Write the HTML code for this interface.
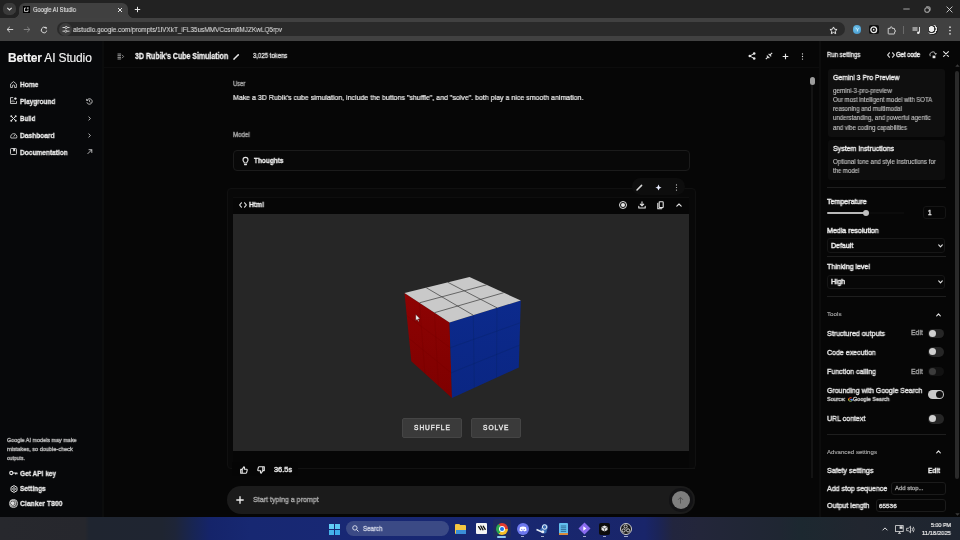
<!DOCTYPE html>
<html><head><meta charset="utf-8">
<style>
*{box-sizing:border-box;margin:0;padding:0}
html,body{width:960px;height:540px;overflow:hidden;background:#060606;font-family:"Liberation Sans",sans-serif;color:#e8e8e8}
.a{position:absolute}
.t{position:absolute;white-space:pre;line-height:1;will-change:transform;-webkit-text-stroke:0.38px currentColor}
svg{position:absolute;overflow:visible}
.ic{fill:none;stroke:#e6e6e6;stroke-width:1.1;stroke-linecap:round;stroke-linejoin:round}
.dv{position:absolute;left:827px;width:119px;height:1px;background:#1e1e1e}
.dd{position:absolute;left:827px;width:118px;height:15px;border:1px solid #161616;border-radius:3px;background:#070707}
.tg{position:absolute;left:928px;width:16px;height:9.5px;border-radius:5px;background:#262626}
.kn{position:absolute;width:7px;height:7px;border-radius:50%;background:#d0d0d0}
.tb{position:absolute;top:517px;height:23px}
</style></head><body>
<!-- ============ CHROME ============ -->
<div class="a" style="left:0;top:0;width:960px;height:18px;background:#222"></div>
<div class="a" style="left:3px;top:3px;width:13px;height:12px;background:#3a3a3a;border-radius:5px"></div>
<svg style="left:6px;top:6px" width="7" height="6" viewBox="0 0 7 6"><path d="M1.3 1.9 L3.5 4 L5.7 1.9" stroke="#dcdcdc" stroke-width="1.2" fill="none"/></svg>
<div class="a" style="left:19px;top:3px;width:109px;height:16px;background:#404040;border-radius:6px 6px 0 0"></div>
<div class="a" style="left:14px;top:13px;width:5px;height:5px;background:radial-gradient(circle at 0 0,#222 4.6px,#404040 5px)"></div>
<div class="a" style="left:128px;top:13px;width:5px;height:5px;background:radial-gradient(circle at 100% 0,#222 4.6px,#404040 5px)"></div>
<div class="a" style="left:23px;top:6px;width:7px;height:7px;background:#000"></div>
<svg style="left:24px;top:7px" width="5" height="5" viewBox="0 0 5 5"><path d="M0.5 1 V4.4 H4 V2.6 M0.5 1 H2.2" stroke="#eee" stroke-width="0.8" fill="none"/><circle cx="3.9" cy="1.1" r="0.8" fill="#eee"/></svg>
<svg style="left:117px;top:6.5px" width="6" height="6" viewBox="0 0 6 6"><path d="M1 1 L5 5 M5 1 L1 5" stroke="#e8e8e8" stroke-width="1"/></svg>
<svg style="left:134px;top:6px" width="7" height="7" viewBox="0 0 7 7"><path d="M3.5 0.8 V6.2 M0.8 3.5 H6.2" stroke="#e8e8e8" stroke-width="1"/></svg>
<svg style="left:903px;top:8px" width="7" height="2" viewBox="0 0 7 2"><path d="M0.3 1 H6.7" stroke="#c8c8c8" stroke-width="0.8"/></svg>
<svg style="left:924px;top:5.5px" width="7" height="7" viewBox="0 0 7 7"><rect x="0.9" y="1.9" width="4.4" height="4.3" rx="1.3" stroke="#d0d0d0" stroke-width="0.9" fill="none"/><path d="M2.2 0.8 H4.8 Q6.1 0.8 6.1 2.1 V4.6" stroke="#d0d0d0" stroke-width="0.8" fill="none"/></svg>
<svg style="left:945.5px;top:5.5px" width="7" height="7" viewBox="0 0 7 7"><path d="M0.6 0.6 L6.4 6.4 M6.4 0.6 L0.6 6.4" stroke="#e0e0e0" stroke-width="0.85"/></svg>

<div class="a" style="left:0;top:18px;width:960px;height:23px;background:#414141"></div>
<svg style="left:6.2px;top:25.8px" width="8" height="7" viewBox="0 0 8 7"><path d="M7.2 3.5 H1.2 M3.8 0.9 L1.1 3.5 L3.8 6.1" stroke="#e0e0e0" stroke-width="0.9" fill="none"/></svg>
<svg style="left:23.3px;top:25.8px" width="8" height="7" viewBox="0 0 8 7"><path d="M0.8 3.5 H6.8 M4.2 0.9 L6.9 3.5 L4.2 6.1" stroke="#8a8a8a" stroke-width="0.9" fill="none"/></svg>
<svg style="left:40.3px;top:25.6px" width="8" height="8" viewBox="0 0 8 8"><path d="M6.6 4.6 A2.7 2.7 0 1 1 5.6 1.9" stroke="#e0e0e0" stroke-width="0.95" fill="none"/><path d="M4.4 0.6 L6.9 1.2 L6.4 3.6 Z" fill="#e0e0e0"/></svg>
<div class="a" style="left:57px;top:21.8px;width:788px;height:14.6px;border-radius:7.3px;background:#2a2a2a"></div>
<div class="a" style="left:58.5px;top:22.6px;width:13px;height:13px;border-radius:6.5px;background:#3d3d3d"></div>
<svg style="left:61.5px;top:26px" width="8" height="7" viewBox="0 0 8 7"><path d="M0.5 1.5 H3 M5.4 1.5 H7.5 M0.5 5.2 H2.4 M4.9 5.2 H7.5" stroke="#e0e0e0" stroke-width="0.9"/><circle cx="4.2" cy="1.5" r="1.1" stroke="#e0e0e0" stroke-width="0.8" fill="none"/><circle cx="3.7" cy="5.2" r="1.1" stroke="#e0e0e0" stroke-width="0.8" fill="none"/></svg>
<svg style="left:829px;top:25.5px" width="9" height="9" viewBox="0 0 24 24"><path d="M12 2.5 L14.8 8.6 L21.5 9.3 L16.5 13.8 L17.9 20.5 L12 17.1 L6.1 20.5 L7.5 13.8 L2.5 9.3 L9.2 8.6 Z" stroke="#e6e6e6" stroke-width="2.6" fill="none" stroke-linejoin="round"/></svg>
<div class="a" style="left:852.5px;top:25.3px;width:8.5px;height:8.5px;border-radius:50%;background:radial-gradient(circle at 40% 40%,#74c8ee,#3a8cc4)"></div>
<svg style="left:854.5px;top:27.3px" width="5" height="5" viewBox="0 0 5 5"><path d="M0.6 1 L2.5 2.5 L4.4 1 M2.5 2.5 V4.4" stroke="#eaf6ff" stroke-width="0.7" fill="none"/></svg>
<div class="a" style="left:869.3px;top:25px;width:9.4px;height:9.4px;border-radius:2px;background:#0e0e0e"></div>
<svg style="left:869.3px;top:25px" width="9.4" height="9.4" viewBox="0 0 9.4 9.4"><circle cx="4.7" cy="4.7" r="2.9" stroke="#f0f0f0" stroke-width="1.3" fill="none"/><circle cx="4.7" cy="4.7" r="0.9" fill="#e0e0e0"/></svg>
<svg style="left:886.5px;top:25.5px" width="9" height="9" viewBox="0 0 9 9"><path d="M1.2 2.4 H3.2 V1.8 Q3.2 0.8 4.2 0.8 Q5.2 0.8 5.2 1.8 V2.4 H7 Q7.6 2.4 7.6 3 V4.2 H7.9 Q8.5 4.2 8.5 5 Q8.5 5.8 7.9 5.8 H7.6 V7.4 Q7.6 8 7 8 H1.8 Q1.2 8 1.2 7.4 Z" stroke="#dcdcdc" stroke-width="0.9" fill="none" stroke-linejoin="round"/></svg>
<div class="a" style="left:903px;top:26px;width:1px;height:8px;background:#6a6a6a"></div>
<svg style="left:912px;top:25.5px" width="9" height="9" viewBox="0 0 9 9"><rect x="0.5" y="1" width="5" height="4" fill="#9a9a9a"/><path d="M7.5 1 V6.5" stroke="#eee" stroke-width="0.9"/><circle cx="6.3" cy="6.8" r="1.3" fill="#eee"/></svg>
<div class="a" style="left:928px;top:25px;width:9.5px;height:9.5px;border-radius:50%;background:radial-gradient(circle at 35% 40%,#f0f0f0 0 30%,#333 32% 45%,#ddd 47% 60%,#222 62%)"></div>
<svg style="left:947.5px;top:25.5px" width="4" height="9" viewBox="0 0 4 9"><circle cx="2" cy="1.2" r="0.85" fill="#ddd"/><circle cx="2" cy="4.5" r="0.85" fill="#ddd"/><circle cx="2" cy="7.8" r="0.85" fill="#ddd"/></svg>

<!-- ============ PAGE ============ -->
<div class="a" style="left:0;top:41px;width:102px;height:476px;background:#07080a"></div>
<div class="a" style="left:102px;top:41px;width:2px;height:476px;background:#0b0c0c"></div>
<div class="a" style="left:104px;top:66.5px;width:715px;height:1px;background:#0c0c0c"></div>
<div class="a" style="left:818.5px;top:41px;width:2px;height:476px;background:#0c0c0c"></div>

<!-- sidebar logo -->
<div class="t" style="left:8.1px;top:51.6px;font-size:12px;letter-spacing:-0.15px;color:#f2f2f2;-webkit-text-stroke:0.15px currentColor"><b>Better</b> AI Studio</div>
<!-- sidebar icons -->
<svg style="left:10px;top:81px" width="7" height="7" viewBox="0 0 7 7"><path d="M0.6 3 L3.5 0.6 L6.4 3 V6.5 H4.6 V5 A1.1 1.1 0 0 0 2.4 5 V6.5 H0.6 Z" stroke="#dedede" stroke-width="0.8" fill="none" stroke-linejoin="round"/></svg>
<svg style="left:10px;top:97.3px" width="7" height="7" viewBox="0 0 7 7"><path d="M0.5 0.6 V6.5 H6.5 V4.2 M0.5 0.6 H3.2" stroke="#dedede" stroke-width="0.85" fill="none"/><path d="M1.8 5.2 V3.6 M3 5.2 V2.6 M4.2 5.2 V4" stroke="#cfcfcf" stroke-width="0.7"/><circle cx="5.4" cy="1.6" r="1.2" fill="#ececec"/></svg>
<svg style="left:10px;top:114.5px" width="7" height="7" viewBox="0 0 7 7"><path d="M1.3 1.3 L5.7 5.7 M5.7 1.3 L1.3 5.7" stroke="#dedede" stroke-width="1"/><circle cx="1.3" cy="1.3" r="1" fill="#dedede"/><circle cx="5.7" cy="1.3" r="1" fill="#dedede"/><circle cx="1.3" cy="5.7" r="1" fill="#dedede"/><circle cx="5.7" cy="5.7" r="1" fill="#dedede"/></svg>
<svg style="left:10px;top:131.5px" width="7.5" height="7" viewBox="0 0 7.5 7"><path d="M0.9 6 A3.1 3.1 0 1 1 6.6 6 Z" stroke="#dedede" stroke-width="0.8" fill="none"/><path d="M3.7 4.6 L5.3 2.6" stroke="#dedede" stroke-width="0.8"/></svg>
<svg style="left:10px;top:147.7px" width="7" height="7" viewBox="0 0 7 7"><rect x="0.5" y="0.5" width="6" height="6" rx="0.8" stroke="#dedede" stroke-width="0.85" fill="none"/><path d="M3.2 0.6 V3.6 L4.2 2.9 L5.2 3.6 V0.6 Z" fill="#e6e6e6"/></svg>
<svg style="left:85.5px;top:98px" width="7" height="7" viewBox="0 0 7 7"><path d="M1.1 2.2 A2.7 2.7 0 1 1 0.9 4.3" stroke="#dedede" stroke-width="0.8" fill="none"/><path d="M0.6 0.9 V2.5 H2.2 M3.5 2.1 V3.6 L4.5 4.3" stroke="#dedede" stroke-width="0.75" fill="none"/></svg>
<svg style="left:87.8px;top:116px" width="3" height="5" viewBox="0 0 3 5"><path d="M0.6 0.6 L2.4 2.5 L0.6 4.4" stroke="#d8d8d8" stroke-width="0.8" fill="none"/></svg>
<svg style="left:87.8px;top:133px" width="3" height="5" viewBox="0 0 3 5"><path d="M0.6 0.6 L2.4 2.5 L0.6 4.4" stroke="#d8d8d8" stroke-width="0.8" fill="none"/></svg>
<svg style="left:86.5px;top:149px" width="5.5" height="5.5" viewBox="0 0 5.5 5.5"><path d="M0.6 4.9 L4.8 0.7 M1.6 0.7 H4.8 V3.9" stroke="#dedede" stroke-width="0.8" fill="none"/></svg>
<svg style="left:9.2px;top:470.3px" width="9" height="6" viewBox="0 0 9 6"><circle cx="2.3" cy="3" r="1.6" stroke="#e6e6e6" stroke-width="1.1" fill="none"/><path d="M3.9 3 H8.4 M6.6 3 V4.6 M8 3 V4.2" stroke="#e6e6e6" stroke-width="1.1"/></svg>
<svg style="left:9.5px;top:484.5px" width="8" height="8" viewBox="0 0 8 8"><path d="M4 0.6 L7 2.3 V5.7 L4 7.4 L1 5.7 V2.3 Z" stroke="#e6e6e6" stroke-width="1" fill="none" stroke-linejoin="round"/><circle cx="4" cy="4" r="1.3" stroke="#e6e6e6" stroke-width="0.9" fill="none"/></svg>
<div class="a" style="left:9px;top:499px;width:8.5px;height:8.5px;border-radius:50%;background:radial-gradient(circle at 40% 45%,#ddd 0 25%,#555 35%,#bbb 50%,#333 70%);border:0.8px solid #ccc"></div>

<!-- main header -->
<svg style="left:116.5px;top:52.5px" width="7" height="7" viewBox="0 0 7 7"><path d="M0.5 1 H4 M0.5 2.7 H4 M0.5 4.4 H4 M0.5 6 H4" stroke="#a8a8a8" stroke-width="0.9"/><path d="M5 1.8 L6.6 3.5 L5 5.2" stroke="#a8a8a8" stroke-width="0.8" fill="none"/></svg>
<svg style="left:233px;top:52.5px" width="7" height="7" viewBox="0 0 7 7"><path d="M1 6 L5.3 1.7" stroke="#e8e8e8" stroke-width="1.5" stroke-linecap="round"/><path d="M0.6 6.4 L1.6 6" stroke="#e8e8e8" stroke-width="0.8"/></svg>
<svg style="left:748px;top:52px" width="8" height="8" viewBox="0 0 8 8"><path d="M6 1.5 L2 4 L6 6.5" stroke="#e8e8e8" stroke-width="0.9" fill="none"/><circle cx="6.2" cy="1.5" r="1.3" fill="#e8e8e8"/><circle cx="1.8" cy="4" r="1.3" fill="#e8e8e8"/><circle cx="6.2" cy="6.5" r="1.3" fill="#e8e8e8"/></svg>
<svg style="left:764.5px;top:52px" width="8" height="8" viewBox="0 0 8 8"><path d="M0.8 7.2 L3.2 4.8 M4.8 3.2 L7.2 0.8" stroke="#e4e4e4" stroke-width="1.1"/><path d="M1.8 3.6 L4.4 6.2 M3.6 1.8 L6.2 4.4" stroke="#e4e4e4" stroke-width="1.1"/></svg>
<svg style="left:782.2px;top:52.5px" width="7" height="7" viewBox="0 0 7 7"><path d="M3.5 0.7 V6.3 M0.7 3.5 H6.3" stroke="#e8e8e8" stroke-width="1.15"/></svg>
<svg style="left:801px;top:52.5px" width="3" height="7" viewBox="0 0 3 7"><circle cx="1.5" cy="0.9" r="0.65" fill="#ddd"/><circle cx="1.5" cy="3.5" r="0.65" fill="#ddd"/><circle cx="1.5" cy="6.1" r="0.65" fill="#ddd"/></svg>
<!-- main scrollbar -->
<div class="a" style="left:811.2px;top:85px;width:1.5px;height:393px;background:#131313"></div>
<div class="a" style="left:810px;top:77px;width:5px;height:7.5px;border-radius:2.5px;background:#9c9c9c"></div>

<!-- thoughts -->
<div class="a" style="left:232.5px;top:149.5px;width:457px;height:21.5px;border:1px solid #1b1b1b;border-radius:4px;background:#080808"></div>
<svg style="left:242px;top:156.5px" width="7" height="9" viewBox="0 0 7 9"><path class="ic" d="M2.3 6 C2.3 4.8 1 4.2 1 2.9 A2.5 2.5 0 0 1 6 2.9 C6 4.2 4.7 4.8 4.7 6 Z M2.5 7.6 H4.5" stroke-width="0.8"/></svg>

<!-- html block -->
<div class="a" style="left:227px;top:188px;width:468.5px;height:281px;border:1px solid #101010;border-radius:4px;background:#080808"></div>
<div class="a" style="left:233px;top:196.5px;width:456px;height:17px;background:#060606;border-top:1px solid #0e0e0e"></div>
<div class="a" style="left:233px;top:451.3px;width:456px;height:17px;background:#060606"></div>
<div class="a" style="left:233px;top:213.5px;width:456px;height:237.8px;background:#262626"></div>
<!-- floating pill -->
<div class="a" style="left:631.5px;top:177.5px;width:53px;height:17.5px;border-radius:9px;background:#0d0d0d"></div>
<svg style="left:635.5px;top:184px" width="7" height="7" viewBox="0 0 7 7"><path d="M1 6 L5.6 1.4" stroke="#d8d8d8" stroke-width="1.5" stroke-linecap="round"/></svg>
<svg style="left:654.5px;top:183.5px" width="7" height="7" viewBox="0 0 7 7"><path d="M3.5 0.4 Q3.9 3.1 6.6 3.5 Q3.9 3.9 3.5 6.6 Q3.1 3.9 0.4 3.5 Q3.1 3.1 3.5 0.4 Z" fill="#e8ecff"/></svg>
<svg style="left:675px;top:183.5px" width="3" height="7" viewBox="0 0 3 7"><circle cx="1.5" cy="0.9" r="0.6" fill="#ccc"/><circle cx="1.5" cy="3.5" r="0.6" fill="#ccc"/><circle cx="1.5" cy="6.1" r="0.6" fill="#ccc"/></svg>
<!-- html header icons -->
<svg style="left:239px;top:201.5px" width="8" height="6" viewBox="0 0 8 6"><path class="ic" d="M2.4 0.8 L0.6 3 L2.4 5.2 M5.6 0.8 L7.4 3 L5.6 5.2" stroke-width="0.9"/></svg>
<div class="a" style="left:618.5px;top:200.7px;width:8.6px;height:8.6px;border-radius:50%;border:1px solid #e0e0e0"></div>
<div class="a" style="left:620.8px;top:203px;width:4px;height:4px;border-radius:50%;background:#e8e8e8"></div>
<svg style="left:637.5px;top:201px" width="8" height="8" viewBox="0 0 8 8"><path class="ic" d="M4 0.8 V4.8 M2.3 3.2 L4 4.9 L5.7 3.2 M0.8 5.4 V7 H7.2 V5.4" stroke-width="0.9"/></svg>
<svg style="left:656.5px;top:200.5px" width="7" height="9" viewBox="0 0 7 9"><rect class="ic" x="2.2" y="0.8" width="4" height="5.8" rx="0.6" stroke-width="0.85"/><path class="ic" d="M0.8 2.4 V7.8 H4.6" stroke-width="0.85"/></svg>
<svg style="left:675.5px;top:203px" width="6" height="4" viewBox="0 0 6 4"><path class="ic" d="M0.8 3.2 L3 1 L5.2 3.2" stroke-width="0.9"/></svg>

<!-- cube -->
<svg style="left:0;top:0" width="960" height="540" viewBox="0 0 960 540">
  <defs><linearGradient id="rg" x1="0" y1="0" x2="0" y2="1"><stop offset="0" stop-color="#8e0303"/><stop offset="1" stop-color="#7e0000"/></linearGradient>
  <linearGradient id="bg" x1="0" y1="0" x2="0" y2="1"><stop offset="0" stop-color="#0c2a8c"/><stop offset="1" stop-color="#0a2683"/></linearGradient></defs>
  <polygon points="404.5,293 449.5,322.5 452,398 411.3,361.3" fill="url(#rg)"/>
  <polygon points="449.5,322.5 520.8,300.5 518.8,367.5 452,398" fill="url(#bg)"/>
  <polygon points="404.5,293 469.5,277 520.8,300.5 449.5,322.5" fill="#c9c9c9"/>
  <g stroke="#3a3a3a" stroke-width="0.7"><line x1="426.2" y1="287.7" x2="473.3" y2="315.2"/><line x1="447.8" y1="282.3" x2="497.0" y2="307.8"/><line x1="419.5" y1="302.8" x2="486.6" y2="284.8"/><line x1="434.5" y1="312.7" x2="503.7" y2="292.7"/></g>
  <g stroke="#08205e" stroke-width="0.5" stroke-opacity="0.6"><line x1="473.3" y1="315.2" x2="474.3" y2="387.8"/><line x1="497.0" y1="307.8" x2="496.5" y2="377.7"/><line x1="450.3" y1="347.7" x2="520.1" y2="322.8"/><line x1="451.2" y1="372.8" x2="519.5" y2="345.2"/></g>
  <g stroke="#600000" stroke-width="0.5" stroke-opacity="0.35"><line x1="419.5" y1="302.8" x2="424.9" y2="373.5"/><line x1="434.5" y1="312.7" x2="438.4" y2="385.8"/><line x1="406.8" y1="315.8" x2="450.3" y2="347.7"/><line x1="409.0" y1="338.5" x2="451.2" y2="372.8"/></g>
  <path d="M415.8 314.5 L415.8 320.5 L417.2 319.2 L418.3 321.6 L419.1 321.2 L418 318.9 L419.9 318.8 Z" fill="#f4f4f4" stroke="#222" stroke-width="0.3"/>
</svg>
<!-- buttons -->
<div class="a" style="left:402px;top:417.5px;width:60px;height:20.5px;border:1px solid #454545;border-radius:2px;background:#3a3a3a"></div>
<div class="a" style="left:471px;top:417.5px;width:49.5px;height:20.5px;border:1px solid #454545;border-radius:2px;background:#3a3a3a"></div>

<!-- thumbs row -->
<div class="a" style="left:232px;top:462px;width:66px;height:14px;background:#050505"></div>
<div class="a" style="left:298px;top:468px;width:397px;height:1px;background:#121212"></div>
<svg style="left:240px;top:465.5px" width="8" height="8" viewBox="0 0 8 8"><path class="ic" d="M0.7 3.4 H2.2 V7.2 H0.7 Z M2.2 3.4 L3.8 0.8 Q4.8 0.9 4.5 2.4 L4.3 3.2 H6.7 Q7.4 3.4 7.2 4.2 L6.6 6.6 Q6.4 7.2 5.8 7.2 H2.2" stroke-width="0.85"/></svg>
<svg style="left:257px;top:466px" width="8" height="8" viewBox="0 0 8 8"><path class="ic" d="M7.3 4.6 H5.8 V0.8 H7.3 Z M5.8 4.6 L4.2 7.2 Q3.2 7.1 3.5 5.6 L3.7 4.8 H1.3 Q0.6 4.6 0.8 3.8 L1.4 1.4 Q1.6 0.8 2.2 0.8 H5.8" stroke-width="0.85"/></svg>

<!-- input -->
<div class="a" style="left:227.3px;top:485.8px;width:467.7px;height:27.8px;border-radius:14px;background:#1b1b1b"></div>
<svg style="left:236.2px;top:496px" width="8" height="8" viewBox="0 0 8 8"><path d="M4 0.3 V7.7 M0.3 4 H7.7" stroke="#ececec" stroke-width="1.35"/></svg>
<div class="a" style="left:669.2px;top:488.2px;width:23.4px;height:23.4px;border-radius:50%;background:#131315"></div>
<div class="a" style="left:671.7px;top:490.7px;width:18.4px;height:18.4px;border-radius:50%;background:#7e7e7e"></div>
<svg style="left:677.4px;top:496px" width="7" height="8" viewBox="0 0 7 8"><path d="M3.5 7.5 V1.6 M1.1 3.8 L3.5 1.3 L5.9 3.8" stroke="#555" stroke-width="1" fill="none"/></svg>

<!-- ============ RIGHT PANEL ============ -->
<svg style="left:886.5px;top:51.8px" width="8" height="6" viewBox="0 0 8 6"><path class="ic" d="M2.4 0.8 L0.6 3 L2.4 5.2 M5.6 0.8 L7.4 3 L5.6 5.2" stroke-width="0.9"/></svg>
<svg style="left:928.8px;top:50.6px" width="8" height="8" viewBox="0 0 8 8"><path d="M1.2 5.2 A2.9 2.9 0 1 1 6.6 3.2" stroke="#e0e0e0" stroke-width="0.8" fill="none"/><path d="M5.6 2.3 L6.7 3.5 L7.6 2.2" stroke="#e0e0e0" stroke-width="0.7" fill="none"/><rect x="3.6" y="4.6" width="2.8" height="2.6" fill="#e6e6e6"/></svg>
<svg style="left:943.2px;top:51.4px" width="6" height="6" viewBox="0 0 6 6"><path class="ic" d="M0.6 0.6 L5.4 5.4 M5.4 0.6 L0.6 5.4" stroke-width="0.9"/></svg>
<div class="a" style="left:828px;top:69px;width:117px;height:67.5px;border-radius:3px;background:#0f0f0f"></div>
<div class="a" style="left:828px;top:140px;width:117px;height:39.5px;border-radius:3px;background:#0d0d0d"></div>
<div class="dv" style="top:186.5px"></div>
<div class="dv" style="top:256px"></div>
<div class="dv" style="top:296px"></div>
<div class="dv" style="top:434px"></div>
<!-- slider -->
<div class="a" style="left:827px;top:212px;width:39px;height:1.6px;background:#b8b8b8;border-radius:1px"></div>
<div class="a" style="left:866px;top:212px;width:38px;height:1.6px;background:#0b0b0b"></div>
<div class="a" style="left:862.6px;top:209.5px;width:6.8px;height:6.8px;border-radius:50%;background:#c0c0c0"></div>
<div class="a" style="left:923px;top:206px;width:22.5px;height:13px;border:1px solid #151515;border-radius:3px"></div>
<div class="dd" style="top:238px;height:14.5px"></div>
<div class="dd" style="top:274.5px;height:14.5px"></div>
<svg style="left:937.5px;top:243.5px" width="5" height="4" viewBox="0 0 5 4"><path class="ic" d="M0.7 0.9 L2.5 2.8 L4.3 0.9" stroke-width="0.8"/></svg>
<svg style="left:937.5px;top:280px" width="5" height="4" viewBox="0 0 5 4"><path class="ic" d="M0.7 0.9 L2.5 2.8 L4.3 0.9" stroke-width="0.8"/></svg>
<svg style="left:936px;top:312.5px" width="5" height="4" viewBox="0 0 5 4"><path class="ic" d="M0.7 2.8 L2.5 0.9 L4.3 2.8" stroke-width="0.8"/></svg>
<svg style="left:936px;top:450px" width="5" height="4" viewBox="0 0 5 4"><path class="ic" d="M0.7 2.8 L2.5 0.9 L4.3 2.8" stroke-width="0.8"/></svg>
<!-- toggles -->
<div class="tg" style="top:328.5px"></div><div class="kn" style="left:928.9px;top:329.7px"></div>
<div class="tg" style="top:347px"></div><div class="kn" style="left:928.9px;top:348.2px"></div>
<div class="tg" style="top:366.5px;background:#121212"></div><div class="kn" style="left:928.9px;top:367.7px;background:#3c3c3c"></div>
<div class="tg" style="top:389.5px;width:16.5px;height:9.8px;left:927.6px;background:#c9c9c9"></div><div class="kn" style="left:935.6px;top:390.8px;background:#101010"></div>
<div class="tg" style="top:414px"></div><div class="kn" style="left:928.9px;top:415.2px"></div>
<!-- google G -->
<svg style="left:847.8px;top:396.6px" width="5" height="5" viewBox="0 0 10 10"><path d="M9.4 5.1 C9.4 4.8 9.4 4.5 9.3 4.2 H5 V6 H7.5 C7.3 6.7 6.4 7.7 5 7.7 C3.5 7.7 2.3 6.5 2.3 5 C2.3 3.5 3.5 2.3 5 2.3 C5.8 2.3 6.4 2.6 6.8 3 L8.1 1.7 C7.3 1 6.2 0.5 5 0.5 C2.5 0.5 0.5 2.5 0.5 5 C0.5 7.5 2.5 9.5 5 9.5 C7.6 9.5 9.4 7.7 9.4 5.1 Z" fill="#e94235"/><path d="M0.5 5 C0.5 7.5 2.5 9.5 5 9.5 C7.6 9.5 9.4 7.7 9.4 5.1 H5 V6 H7.5 C7.3 6.7 6.4 7.7 5 7.7 C3.5 7.7 2.3 6.5 2.3 5 Z" fill="#34a853"/><path d="M9.3 4.2 H5 V6 H7.5 C7.4 6.4 7.1 6.9 6.6 7.3 L8 8.5 C8.9 7.6 9.4 6.5 9.4 5.1 C9.4 4.8 9.4 4.5 9.3 4.2 Z" fill="#4285f4"/><path d="M0.5 5 C0.5 4.2 0.7 3.5 1 2.9 L2.5 4 C2.4 4.3 2.3 4.7 2.3 5 C2.3 5.3 2.4 5.7 2.5 6 L1 7.1 C0.7 6.5 0.5 5.8 0.5 5 Z" fill="#fbbc05"/></svg>
<!-- inputs -->
<div class="a" style="left:891px;top:481.5px;width:55px;height:13px;border:1px solid #1b1b1b;border-radius:3px"></div>
<div class="a" style="left:875.5px;top:499px;width:70.5px;height:13px;border:1px solid #1b1b1b;border-radius:3px"></div>
<!-- right scrollbar -->
<div class="a" style="left:955px;top:70.5px;width:3.8px;height:408px;border-radius:2px;background:#2a2a2a"></div>
<svg style="left:954.5px;top:63.5px" width="5" height="3" viewBox="0 0 5 3"><path d="M0.3 2.7 L2.5 0.3 L4.7 2.7 Z" fill="#3a3a3a"/></svg>
<svg style="left:954.5px;top:512.5px" width="5" height="3" viewBox="0 0 5 3"><path d="M0.3 0.3 L2.5 2.7 L4.7 0.3 Z" fill="#3a3a3a"/></svg>

<!-- ============ TASKBAR ============ -->
<div class="a" style="left:0;top:517px;width:960px;height:23px;background:linear-gradient(90deg,#27282d 0px,#26272d 85px,#1f2530 89px,#1f2531 162px,#1e2538 175px,#182552 192px,#15246a 210px,#172872 250px,#182874 330px,#182770 520px,#19256a 645px,#1b2458 658px,#22253e 673px,#23263a 700px,#1f2632 780px,#1c2830 800px,#21262f 860px,#1e2530 960px)"></div>
<div class="a" style="left:329px;top:523.6px;width:5px;height:5px;background:#62cdf6"></div>
<div class="a" style="left:334.9px;top:523.6px;width:5px;height:5px;background:#5ac6f2"></div>
<div class="a" style="left:329px;top:529.5px;width:5px;height:5px;background:#45b3ea"></div>
<div class="a" style="left:334.9px;top:529.5px;width:5px;height:5px;background:#3daceb"></div>
<div class="a" style="left:346px;top:521px;width:103px;height:15px;border-radius:8px;background:#3b4a85"></div>
<svg style="left:351.5px;top:524.8px" width="7" height="7" viewBox="0 0 7 7"><circle cx="2.9" cy="2.9" r="2.2" stroke="#e0e4f0" stroke-width="0.9" fill="none"/><path d="M4.5 4.5 L6.5 6.5" stroke="#e0e4f0" stroke-width="1"/></svg>
<!-- folder -->
<div class="a" style="left:454.7px;top:523.5px;width:5px;height:2.5px;background:#f0c040;border-radius:1px 1px 0 0"></div>
<div class="a" style="left:454.7px;top:525px;width:11.7px;height:9px;background:#f4c542;border-radius:1px"></div>
<div class="a" style="left:455.5px;top:530px;width:10px;height:3.6px;background:#3b8fd8"></div>
<!-- W icon -->
<div class="a" style="left:475.8px;top:522.5px;width:11.2px;height:11.7px;background:#f4f4f4;border-radius:1px"></div>
<svg style="left:476.5px;top:524.2px" width="10" height="8" viewBox="0 0 10 8"><path d="M1.6 2.6 L3.6 5.6 M3.8 2 L6 5.8 M6.2 2.2 L8.2 5.4" stroke="#111" stroke-width="1.3" fill="none" stroke-linecap="round"/></svg>
<!-- chrome hovered -->
<div class="a" style="left:492.5px;top:519px;width:18.5px;height:19px;border-radius:3px;background:#1f2c62"></div>
<div class="a" style="left:495.7px;top:522.7px;width:12px;height:12px;border-radius:50%;background:conic-gradient(from -30deg,#e33b2e 0 120deg,#f6c026 120deg 240deg,#2da94f 240deg 360deg)"></div>
<div class="a" style="left:498.7px;top:525.7px;width:6px;height:6px;border-radius:50%;background:#fff"></div>
<div class="a" style="left:499.5px;top:526.5px;width:4.4px;height:4.4px;border-radius:50%;background:#1a73e8"></div>
<div class="a" style="left:497px;top:536px;width:9px;height:1.5px;border-radius:1px;background:#8cc8f0"></div>
<!-- discord -->
<div class="a" style="left:516.5px;top:522.7px;width:12px;height:12px;border-radius:50%;background:#6c78ee"></div>
<svg style="left:518.5px;top:525.5px" width="8" height="6" viewBox="0 0 8 6"><path d="M1 1.2 Q4 0 7 1.2 L7.6 4.6 Q6.5 5.5 5.4 5.4 L5 4.6 Q4 5 3 4.6 L2.6 5.4 Q1.5 5.5 0.4 4.6 Z" fill="#fff"/><circle cx="2.8" cy="3.3" r="0.6" fill="#5865f2"/><circle cx="5.2" cy="3.3" r="0.6" fill="#5865f2"/></svg>
<!-- steam -->
<svg style="left:536px;top:522.5px" width="13" height="12" viewBox="0 0 13 12"><path d="M1 6.5 L5.5 8.5 Q6 11 8.5 10.5 Q11 10 10.8 7.5 L12 4 Q11.5 1 8.5 1 Q6 1 5.8 4 L4 6.8 Z" fill="#3b6fb6"/><circle cx="8.6" cy="4" r="2.2" fill="none" stroke="#e8eef6" stroke-width="1"/><path d="M0.5 6.5 L6 9.2" stroke="#e8eef6" stroke-width="1.4"/><circle cx="6.8" cy="8.8" r="1.5" fill="#e8eef6"/></svg>
<!-- notepad -->
<div class="a" style="left:558.8px;top:522.5px;width:9px;height:12px;background:#62c0ee;border-radius:1px"></div>
<div class="a" style="left:558.8px;top:533px;width:9px;height:1.5px;background:#d98a3a"></div>
<svg style="left:559.8px;top:523.5px" width="7" height="10" viewBox="0 0 7 10"><path d="M0.8 2 H6.2 M0.8 3.8 H6.2 M0.8 5.6 H6.2 M0.8 7.4 H6.2" stroke="#1d4f7a" stroke-width="0.7"/></svg>
<!-- purple diamond -->
<svg style="left:577.7px;top:522.2px" width="13" height="13" viewBox="0 0 13 13"><path d="M6.5 0.5 L12.5 6.5 L6.5 12.5 L0.5 6.5 Z" fill="#8a6cf0"/><path d="M5.3 4.3 L8.4 6.5 L5.3 8.7 Z" fill="#fff"/></svg>
<!-- box icon -->
<div class="a" style="left:598.5px;top:523px;width:11.5px;height:11.5px;border-radius:2px;background:#0c0c0c"></div>
<svg style="left:600.8px;top:525.3px" width="7" height="7" viewBox="0 0 7 7"><path d="M3.5 0.5 L6.5 2 V5 L3.5 6.5 L0.5 5 V2 Z" fill="#e8e8e8"/><path d="M0.5 2 L3.5 3.5 L6.5 2 M3.5 3.5 V6.5" stroke="#333" stroke-width="0.6" fill="none"/></svg>
<!-- obs -->
<div class="a" style="left:619.5px;top:522.5px;width:12.5px;height:12.5px;border-radius:50%;background:#1a1a1a;border:0.8px solid #cfcfcf"></div>
<svg style="left:621px;top:524px" width="10" height="10" viewBox="0 0 10 10"><circle cx="4.6" cy="2.5" r="1.6" stroke="#eee" stroke-width="0.8" fill="none"/><circle cx="2.6" cy="6.5" r="1.6" stroke="#eee" stroke-width="0.8" fill="none"/><circle cx="7.1" cy="6.4" r="1.6" stroke="#eee" stroke-width="0.8" fill="none"/></svg>
<!-- indicators -->
<div class="a" style="left:521px;top:536.3px;width:3px;height:1.2px;background:#a0a8c8"></div>
<div class="a" style="left:541px;top:536.3px;width:3px;height:1.2px;background:#a0a8c8"></div>
<div class="a" style="left:583px;top:536.3px;width:3px;height:1.2px;background:#a0a8c8"></div>
<div class="a" style="left:603px;top:536.3px;width:3px;height:1.2px;background:#a0a8c8"></div>
<div class="a" style="left:623.5px;top:536.3px;width:4px;height:1.2px;background:#a0a8c8"></div>
<!-- tray -->
<svg style="left:881.8px;top:526.8px" width="6" height="4" viewBox="0 0 6 4"><path d="M0.6 3.3 L3 0.9 L5.4 3.3" stroke="#f0f0f0" stroke-width="0.9" fill="none"/></svg>
<svg style="left:894.5px;top:524.5px" width="9" height="9" viewBox="0 0 9 9"><rect x="0.6" y="0.6" width="7.6" height="6" stroke="#e0e0e0" stroke-width="0.8" fill="none"/><path d="M3 8.3 H6 M4.5 6.6 V8.3" stroke="#e0e0e0" stroke-width="0.8"/><rect x="4.6" y="1.3" width="3" height="2.5" fill="#e0e0e0"/></svg>
<svg style="left:905.5px;top:524.5px" width="10" height="9" viewBox="0 0 10 9"><path d="M0.6 3.3 H2.3 L4.5 1.2 V7.8 L2.3 5.7 H0.6 Z" stroke="#e0e0e0" stroke-width="0.8" fill="none"/><path d="M6 2.8 Q7 4.5 6 6.2 M7.3 1.8 Q9 4.5 7.3 7.2" stroke="#e0e0e0" stroke-width="0.8" fill="none"/></svg>

<div class="t" style="left:33.00px;top:6.02px;font-size:7.42px;color:#e4e4e4;transform:scaleX(0.7735);transform-origin:0 0;-webkit-text-stroke:0.1px currentColor;">Google AI Studio</div>
<div class="t" style="left:73.00px;top:26.06px;font-size:7.84px;color:#dcdcdc;transform:scaleX(0.8226);transform-origin:0 0;-webkit-text-stroke:0.1px currentColor;">aistudio.google.com/prompts/1lVXkT_iFL35usMMVCcsm6MJZKwLQ5rpv</div>
<div class="t" style="left:19.70px;top:80.84px;font-size:7.63px;color:#ececec;font-weight:700;-webkit-text-stroke:0.28px currentColor;transform:scaleX(0.8637);transform-origin:0 0;">Home</div>
<div class="t" style="left:19.70px;top:97.54px;font-size:7.63px;color:#ececec;font-weight:700;-webkit-text-stroke:0.28px currentColor;transform:scaleX(0.8414);transform-origin:0 0;">Playground</div>
<div class="t" style="left:19.70px;top:115.04px;font-size:7.63px;color:#ececec;font-weight:700;-webkit-text-stroke:0.28px currentColor;transform:scaleX(0.8026);transform-origin:0 0;">Build</div>
<div class="t" style="left:19.70px;top:131.94px;font-size:7.63px;color:#ececec;font-weight:700;-webkit-text-stroke:0.28px currentColor;transform:scaleX(0.8662);transform-origin:0 0;">Dashboard</div>
<div class="t" style="left:19.70px;top:149.04px;font-size:7.63px;color:#ececec;font-weight:700;-webkit-text-stroke:0.28px currentColor;transform:scaleX(0.8613);transform-origin:0 0;">Documentation</div>
<div class="t" style="left:7.40px;top:438.07px;font-size:5.94px;color:#b8b8b8;transform:scaleX(0.9156);transform-origin:0 0;">Google AI models may make</div>
<div class="t" style="left:7.40px;top:447.37px;font-size:5.94px;color:#b8b8b8;transform:scaleX(0.9404);transform-origin:0 0;">mistakes, so double-check</div>
<div class="t" style="left:7.40px;top:456.37px;font-size:5.94px;color:#b8b8b8;transform:scaleX(0.8420);transform-origin:0 0;">outputs.</div>
<div class="t" style="left:19.70px;top:469.94px;font-size:7.63px;color:#ececec;font-weight:700;-webkit-text-stroke:0.28px currentColor;transform:scaleX(0.8597);transform-origin:0 0;">Get API key</div>
<div class="t" style="left:19.70px;top:484.84px;font-size:7.63px;color:#ececec;font-weight:700;-webkit-text-stroke:0.28px currentColor;transform:scaleX(0.8540);transform-origin:0 0;">Settings</div>
<div class="t" style="left:19.70px;top:499.84px;font-size:7.63px;color:#ececec;font-weight:700;-webkit-text-stroke:0.28px currentColor;transform:scaleX(0.8950);transform-origin:0 0;">Clanker T800</div>
<div class="t" style="left:134.80px;top:51.82px;font-size:8.48px;color:#f2f2f2;font-weight:700;-webkit-text-stroke:0.28px currentColor;transform:scaleX(0.8269);transform-origin:0 0;">3D Rubik's Cube Simulation</div>
<div class="t" style="left:252.50px;top:52.95px;font-size:6.68px;color:#d4d4d4;transform:scaleX(0.9001);transform-origin:0 0;">3,025 tokens</div>
<div class="t" style="left:232.90px;top:80.52px;font-size:6.36px;color:#a0a0a0;transform:scaleX(0.9153);transform-origin:0 0;">User</div>
<div class="t" style="left:232.90px;top:93.75px;font-size:7.74px;color:#ececec;transform:scaleX(0.9059);transform-origin:0 0;-webkit-text-stroke:0.22px currentColor;">Make a 3D Rubik's cube simulation, include the buttons "shuffle", and "solve". both play a nice smooth animation.</div>
<div class="t" style="left:232.90px;top:132.42px;font-size:6.36px;color:#a0a0a0;transform:scaleX(0.9638);transform-origin:0 0;">Model</div>
<div class="t" style="left:254.20px;top:156.64px;font-size:7.63px;color:#f0f0f0;font-weight:700;-webkit-text-stroke:0.28px currentColor;transform:scaleX(0.8464);transform-origin:0 0;">Thoughts</div>
<div class="t" style="left:249.00px;top:200.82px;font-size:7.42px;color:#f0f0f0;font-weight:700;-webkit-text-stroke:0.28px currentColor;transform:scaleX(0.9047);transform-origin:0 0;">Html</div>
<div class="t" style="left:413.60px;top:424.64px;font-size:6.57px;color:#e6e6e6;letter-spacing:0.999px;-webkit-text-stroke:0.35px currentColor;">SHUFFLE</div>
<div class="t" style="left:482.60px;top:424.64px;font-size:6.57px;color:#e6e6e6;letter-spacing:1.023px;-webkit-text-stroke:0.35px currentColor;">SOLVE</div>
<div class="t" style="left:273.70px;top:465.82px;font-size:7.42px;color:#e0e0e0;transform:scaleX(0.9931);transform-origin:0 0;-webkit-text-stroke:0.45px currentColor;">36.5s</div>
<div class="t" style="left:253.00px;top:496.46px;font-size:7.84px;color:#a8a8a8;transform:scaleX(0.9041);transform-origin:0 0;">Start typing a prompt</div>
<div class="t" style="left:826.90px;top:51.76px;font-size:6.78px;color:#d4d4d4;transform:scaleX(0.8854);transform-origin:0 0;-webkit-text-stroke:0.45px currentColor;">Run settings</div>
<div class="t" style="left:896.30px;top:51.76px;font-size:6.78px;color:#e8e8e8;transform:scaleX(0.8774);transform-origin:0 0;-webkit-text-stroke:0.45px currentColor;">Get code</div>
<div class="t" style="left:832.80px;top:73.84px;font-size:7.63px;color:#ececec;transform:scaleX(0.9005);transform-origin:0 0;">Gemini 3 Pro Preview</div>
<div class="t" style="left:832.80px;top:87.52px;font-size:6.36px;color:#c4c4c4;transform:scaleX(0.9860);transform-origin:0 0;-webkit-text-stroke:0.12px currentColor;">gemini-3-pro-preview</div>
<div class="t" style="left:832.80px;top:96.82px;font-size:6.36px;color:#c4c4c4;transform:scaleX(0.9388);transform-origin:0 0;-webkit-text-stroke:0.12px currentColor;">Our most intelligent model with SOTA</div>
<div class="t" style="left:832.80px;top:106.02px;font-size:6.36px;color:#c4c4c4;transform:scaleX(0.9461);transform-origin:0 0;-webkit-text-stroke:0.12px currentColor;">reasoning and multimodal</div>
<div class="t" style="left:832.80px;top:115.22px;font-size:6.36px;color:#c4c4c4;transform:scaleX(0.9539);transform-origin:0 0;-webkit-text-stroke:0.12px currentColor;">understanding, and powerful agentic</div>
<div class="t" style="left:832.80px;top:124.52px;font-size:6.36px;color:#c4c4c4;transform:scaleX(0.9527);transform-origin:0 0;-webkit-text-stroke:0.12px currentColor;">and vibe coding capabilities</div>
<div class="t" style="left:832.80px;top:145.34px;font-size:7.63px;color:#ececec;transform:scaleX(0.9242);transform-origin:0 0;">System instructions</div>
<div class="t" style="left:832.80px;top:158.82px;font-size:6.36px;color:#c4c4c4;transform:scaleX(0.9503);transform-origin:0 0;-webkit-text-stroke:0.12px currentColor;">Optional tone and style instructions for</div>
<div class="t" style="left:832.80px;top:168.12px;font-size:6.36px;color:#c4c4c4;transform:scaleX(0.9378);transform-origin:0 0;-webkit-text-stroke:0.12px currentColor;">the model</div>
<div class="t" style="left:827.00px;top:197.92px;font-size:7.42px;color:#ececec;transform:scaleX(0.9548);transform-origin:0 0;-webkit-text-stroke:0.45px currentColor;">Temperature</div>
<div class="t" style="left:927.60px;top:210.02px;font-size:6.36px;color:#e0e0e0;">1</div>
<div class="t" style="left:827.00px;top:227.42px;font-size:7.42px;color:#ececec;transform:scaleX(0.9514);transform-origin:0 0;-webkit-text-stroke:0.45px currentColor;">Media resolution</div>
<div class="t" style="left:831.00px;top:241.52px;font-size:7.42px;color:#ececec;transform:scaleX(0.9459);transform-origin:0 0;-webkit-text-stroke:0.45px currentColor;">Default</div>
<div class="t" style="left:827.00px;top:263.22px;font-size:7.42px;color:#ececec;transform:scaleX(0.9471);transform-origin:0 0;-webkit-text-stroke:0.45px currentColor;">Thinking level</div>
<div class="t" style="left:831.00px;top:278.42px;font-size:7.42px;color:#ececec;transform:scaleX(0.9321);transform-origin:0 0;-webkit-text-stroke:0.45px currentColor;">High</div>
<div class="t" style="left:827.00px;top:312.36px;font-size:5.83px;color:#a4a4a4;transform:scaleX(1.0654);transform-origin:0 0;-webkit-text-stroke:0.15px currentColor;">Tools</div>
<div class="t" style="left:827.00px;top:330.12px;font-size:7.42px;color:#e4e4e4;transform:scaleX(0.9582);transform-origin:0 0;">Structured outputs</div>
<div class="t" style="left:910.60px;top:329.77px;font-size:6.89px;color:#9a9a9a;transform:scaleX(0.9866);transform-origin:0 0;">Edit</div>
<div class="t" style="left:827.00px;top:348.82px;font-size:7.42px;color:#e4e4e4;transform:scaleX(0.9481);transform-origin:0 0;">Code execution</div>
<div class="t" style="left:827.00px;top:367.72px;font-size:7.42px;color:#e4e4e4;transform:scaleX(0.9520);transform-origin:0 0;">Function calling</div>
<div class="t" style="left:910.60px;top:369.27px;font-size:6.89px;color:#9a9a9a;transform:scaleX(0.9866);transform-origin:0 0;">Edit</div>
<div class="t" style="left:827.00px;top:386.72px;font-size:7.42px;color:#e4e4e4;transform:scaleX(0.9409);transform-origin:0 0;">Grounding with Google Search</div>
<div class="t" style="left:827.00px;top:396.84px;font-size:5.62px;color:#c4c4c4;transform:scaleX(0.9564);transform-origin:0 0;">Source:</div>
<div class="t" style="left:853.30px;top:396.84px;font-size:5.62px;color:#c4c4c4;transform:scaleX(0.9780);transform-origin:0 0;">Google Search</div>
<div class="t" style="left:827.00px;top:415.02px;font-size:7.42px;color:#e4e4e4;transform:scaleX(0.9460);transform-origin:0 0;">URL context</div>
<div class="t" style="left:827.00px;top:449.76px;font-size:5.83px;color:#a4a4a4;transform:scaleX(1.0495);transform-origin:0 0;-webkit-text-stroke:0.15px currentColor;">Advanced settings</div>
<div class="t" style="left:827.00px;top:467.02px;font-size:7.42px;color:#e4e4e4;transform:scaleX(0.9549);transform-origin:0 0;">Safety settings</div>
<div class="t" style="left:928.00px;top:467.02px;font-size:7.42px;color:#f0f0f0;font-weight:700;-webkit-text-stroke:0.28px currentColor;transform:scaleX(0.8714);transform-origin:0 0;">Edit</div>
<div class="t" style="left:827.00px;top:484.92px;font-size:7.42px;color:#e4e4e4;transform:scaleX(0.9508);transform-origin:0 0;">Add stop sequence</div>
<div class="t" style="left:895.40px;top:486.27px;font-size:5.94px;color:#9a9a9a;">Add stop...</div>
<div class="t" style="left:827.00px;top:502.22px;font-size:7.42px;color:#e4e4e4;transform:scaleX(0.9554);transform-origin:0 0;">Output length</div>
<div class="t" style="left:879.10px;top:503.57px;font-size:5.94px;color:#dadada;transform:scaleX(1.0717);transform-origin:0 0;-webkit-text-stroke:0.4px currentColor;">65536</div>
<div class="t" style="left:363.30px;top:525.56px;font-size:6.78px;color:#c8cde0;transform:scaleX(0.9096);transform-origin:0 0;">Search</div>
<div class="t" style="left:930.90px;top:523.07px;font-size:5.94px;color:#f0f0f0;transform:scaleX(0.8994);transform-origin:0 0;-webkit-text-stroke:0.2px currentColor;">5:00 PM</div>
<div class="t" style="left:922.00px;top:530.67px;font-size:5.94px;color:#f0f0f0;transform:scaleX(0.9836);transform-origin:0 0;-webkit-text-stroke:0.2px currentColor;">11/18/2025</div>
</body></html>
